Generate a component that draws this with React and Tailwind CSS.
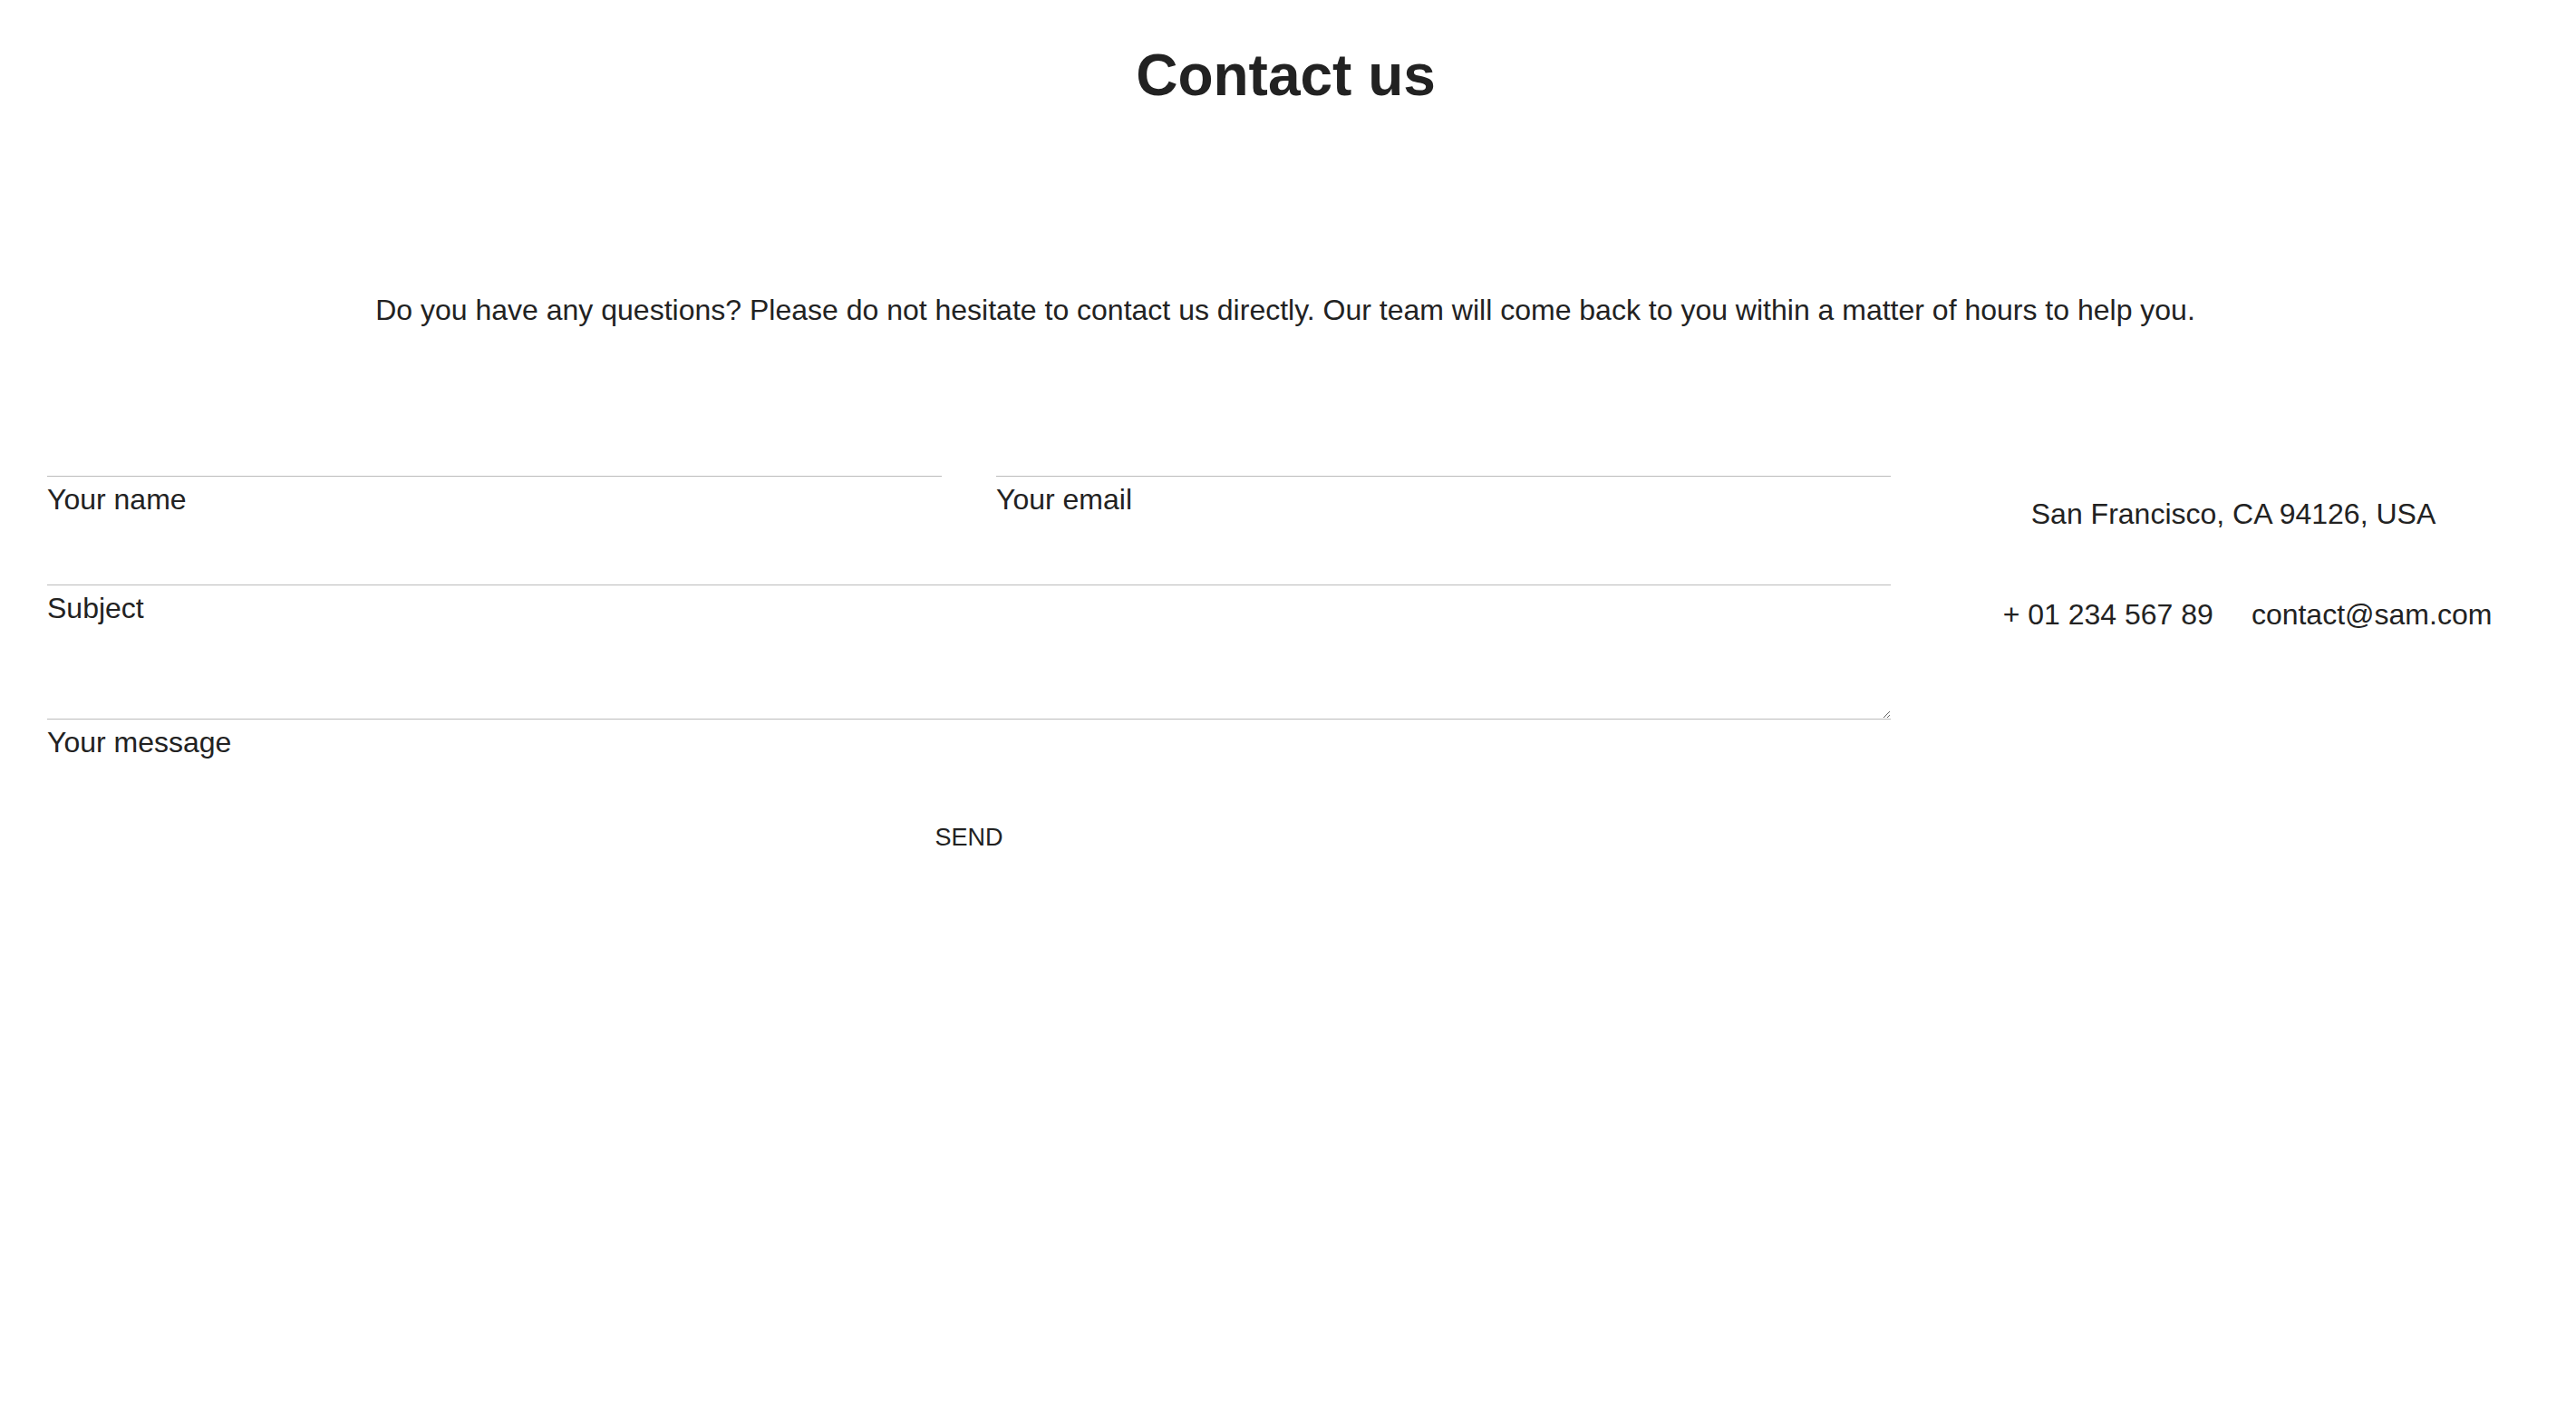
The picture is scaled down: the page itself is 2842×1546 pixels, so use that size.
import React, { useState } from 'react';

const Field = ({ label, value, onChange, multiline = false }) => (
  <div className="flex flex-col">
    {multiline ? (
      <textarea
        value={value}
        onChange={onChange}
        className="block h-[88px] w-full resize border-b border-[#bbbbbb] bg-transparent text-[32px] outline-none"
      />
    ) : (
      <input
        type="text"
        value={value}
        onChange={onChange}
        className="block h-[60px] w-full border-b border-[#bbbbbb] bg-transparent text-[32px] outline-none"
      />
    )}
    <label className="mt-[9px] text-[32px] leading-none">{label}</label>
  </div>
);

const App = () => {
  const [form, setForm] = useState({ name: '', email: '', subject: '', message: '' });

  const update = (key) => (e) => setForm({ ...form, [key]: e.target.value });

  return (
    <div className="min-h-screen bg-white font-['Liberation_Sans',Arial,sans-serif] text-[#222222]">
      <h1 className="pt-[51px] pr-[5px] text-center text-[64px] font-bold leading-none">Contact us</h1>

      <p className="mt-[211px] pr-[6px] text-center text-[32px] leading-none">
        Do you have any questions? Please do not hesitate to contact us directly. Our team will come back to you within a matter of hours to help you.
      </p>

      <div className="mt-[108px] grid grid-cols-[2034px_1fr] pl-[52px]">
        <form onSubmit={(e) => e.preventDefault()} className="flex flex-col gap-[19px]">
          <div className="grid grid-cols-2 gap-[60px]">
            <Field label="Your name" value={form.name} onChange={update('name')} />
            <Field label="Your email" value={form.email} onChange={update('email')} />
          </div>
          <Field label="Subject" value={form.subject} onChange={update('subject')} />
          <Field label="Your message" value={form.message} onChange={update('message')} multiline />
          <div className="mt-[57px] text-center">
            <button type="submit" className="text-[27px] leading-none">
              SEND
            </button>
          </div>
        </form>

        <div className="flex flex-col items-center pt-[85px] text-[32px] leading-none">
          <p>San Francisco, CA 94126, USA</p>
          <div className="mt-[79px] flex gap-[42px] pl-[31px]">
            <span>+ 01 234 567 89</span>
            <span>contact@sam.com</span>
          </div>
        </div>
      </div>
    </div>
  );
};

export default App;
